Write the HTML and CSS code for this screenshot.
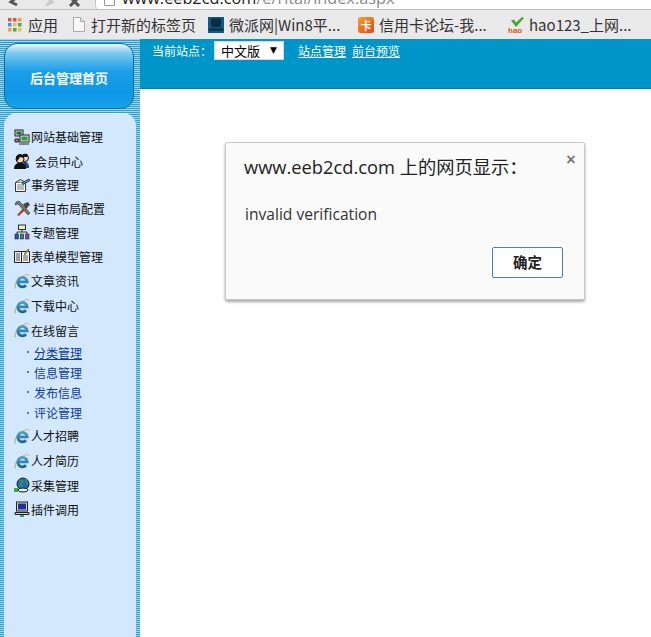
FILE: index.html
```html
<!DOCTYPE html>
<html lang="zh-CN">
<head>
<meta charset="utf-8">
<title>后台管理</title>
<link rel="stylesheet" href="styles.css">
</head>
<body>
<svg class="defs" width="0" height="0" aria-hidden="true">
  <defs>
    <linearGradient id="ieFill" gradientUnits="userSpaceOnUse" x1="0" y1="3" x2="0" y2="15"><stop offset="0" stop-color="#4fa8d4"/><stop offset="1" stop-color="#17609a"/></linearGradient>
    <symbol id="ie" viewBox="0 0 16 16">
      <path d="M1.500 15.500C0 11 4 5 10 2.500" fill="none" stroke="#cdb27a" stroke-width="1.300"/>
      <path d="M5 8.800H13.200A4.700 4.700 0 1 0 12 12.300" fill="none" stroke="url(#ieFill)" stroke-width="2.800"/>
      <path d="M9 2.800C12 1 15 1 15.500 3" fill="none" stroke="#d9b76a" stroke-width="1"/>
    </symbol>
    <linearGradient id="card" x1="0" y1="0" x2="1" y2="1"><stop offset="0" stop-color="#f7a21e"/><stop offset="1" stop-color="#e6441a"/></linearGradient>
  </defs>
</svg>

<header class="chrome">
  <div class="toolbar">
    <div class="nav-buttons">
      <svg class="nav-icon" width="90" height="10" viewBox="0 0 90 10">
        <path d="M18 -4 11 2l6 3" fill="none" stroke="#555" stroke-width="3"/>
        <path d="M46 -4l6 6-6 3" fill="none" stroke="#c9c9c9" stroke-width="3"/>
        <path d="M70 -3l9 9M79 -3l-9 9" stroke="#555" stroke-width="3"/>
      </svg>
    </div>
    <div class="omnibox">
      <svg class="page-icon" width="11" height="8" viewBox="0 0 11 8"><path d="M.5 0v5.500h10V0" fill="#fff" stroke="#999"/></svg>
      <span class="url"><b>www.eeb2cd.com</b>/e/ritai/index.aspx</span>
    </div>
  </div>
  <nav class="bookmarks">
    <a class="bookmark apps">
      <svg width="14" height="14" viewBox="0 0 14 14">
        <g fill="#d9534a"><rect width="3.500" height="3.500"/><rect x="5" width="3.500" height="3.500"/></g><rect x="10" width="3.500" height="3.500" fill="#e8a33d"/>
        <g fill="#4a8fd9"><rect y="5" width="3.500" height="3.500"/></g><rect x="5" y="5" width="3.500" height="3.500" fill="#e8c33d"/><rect x="10" y="5" width="3.500" height="3.500" fill="#53a653"/>
        <rect y="10" width="3.500" height="3.500" fill="#e8a33d"/><rect x="5" y="10" width="3.500" height="3.500" fill="#53a653"/><rect x="10" y="10" width="3.500" height="3.500" fill="#e8c33d"/>
      </svg>
      应用
    </a>
    <a class="bookmark newtab">
      <svg width="12" height="15" viewBox="0 0 12 15"><path d="M.5.500h7l4 4v10H.5z" fill="#f8f8f8" stroke="#aaa"/><path d="M7.500.500v4h4" fill="#ddd" stroke="#aaa"/></svg>
      打开新的标签页
    </a>
    <a class="bookmark weipai">
      <svg width="16" height="16" viewBox="0 0 16 16"><rect width="16" height="16" fill="#0d5c86"/><rect x="3" y="1.500" width="10" height="8.500" fill="#0b2a44"/><rect x="1" y="11.500" width="14" height="2" fill="#0b2a44"/></svg>
      <span class="shift">微派网|Win8平...</span>
    </a>
    <a class="bookmark credit">
      <svg width="16" height="16" viewBox="0 0 16 16"><rect width="16" height="16" rx="2.500" fill="url(#card)"/><text class="card-glyph" x="8" y="12.500">卡</text></svg>
      <span class="shift">信用卡论坛-我...</span>
    </a>
    <a class="bookmark hao">
      <svg width="17" height="16" viewBox="0 0 17 16"><path d="M3 3.500l3-1 2 3 6-5.500 2 1-8 9z" fill="#4aa52e"/><text class="hao-glyph" x="0" y="15.500">hao</text></svg>
      <span class="shift">hao123_上网...</span>
    </a>
  </nav>
</header>

<div class="page">
  <aside class="sidebar">
    <a class="home">后台管理首页</a>
    <ul class="menu">
      <li class="item tall">
        <svg class="icon" viewBox="0 0 16 16"><rect x="1" y="1" width="8" height="6" fill="#cfd5cf" stroke="#222"/><rect x="2.500" y="2.500" width="5" height="3" fill="#1f6f3a"/><rect x="6" y="6" width="9" height="7" fill="#dfe3df" stroke="#222"/><rect x="7.500" y="7.500" width="6" height="4" fill="#22a03c"/><path d="M1 10h4v3H1zM5 15h10" stroke="#222" fill="#888"/></svg>
        网站基础管理
      </li>
      <li class="item indent">
        <svg class="icon" viewBox="0 0 16 16"><circle cx="11" cy="5" r="3.500" fill="#f3d9b8" stroke="#111"/><path d="M8 2.500a3.500 3 0 0 1 6-.5l-1 2H9z" fill="#111"/><path d="M7 15c0-5 2-6 4-6s4 1 4 6z" fill="#24408f"/><circle cx="6" cy="6" r="4" fill="#f3d9b8" stroke="#111"/><path d="M2 6a4 4.500 0 0 1 8-1L6 4 3.500 8z" fill="#111"/><path d="M0 16c0-5 3-6 6-6s6 1 6 6z" fill="#111"/></svg>
        会员中心
      </li>
      <li class="item short">
        <svg class="icon" viewBox="0 0 16 16"><path d="M1.500 5.500h10v9h-10z" fill="#fff" stroke="#333"/><path d="M3 8h7M3 10h7M3 12h7" stroke="#777"/><path d="M1.500 5.500l5-3 5 3" fill="#d8d8c0" stroke="#333"/><path d="M8 6 15 2l1 1.500-7 4z" fill="#5aa0d8" stroke="#245"/></svg>
        事务管理
      </li>
      <li class="item indent-sm">
        <svg class="icon" viewBox="0 0 16 16"><path d="M3 15 12 5l2 2-9 9z" fill="#c23a1e"/><path d="M9 4l5-2 2 3-4 3z" fill="#444"/><path d="M14 15 4 4l-3 1 1-3 3-1 3 3 8 9z" fill="#777" stroke="#222" stroke-width=".5"/></svg>
        栏目布局配置
      </li>
      <li class="item">
        <svg class="icon" viewBox="0 0 16 16"><rect x="4.500" y="1" width="7" height="4.500" fill="#f0eec0" stroke="#333"/><path d="M8 5.500V8M3 10V8h10v2" fill="none" stroke="#333"/><rect x="1" y="10" width="3.500" height="5" fill="#2c55a8" stroke="#111" stroke-width=".5"/><rect x="6.200" y="10" width="3.500" height="5" fill="#2c8a70" stroke="#111" stroke-width=".5"/><rect x="11.500" y="10" width="3.500" height="5" fill="#7a4aa8" stroke="#111" stroke-width=".5"/></svg>
        专题管理
      </li>
      <li class="item">
        <svg class="icon" viewBox="0 0 16 16"><path d="M.5 3.500h7v11h-7z" fill="#eee" stroke="#222"/><path d="M7.500 3.500h8v11h-8z" fill="#fff" stroke="#222"/><path d="M2 6h4M2 8h4M2 10h4M2 12h4M9 8h5M9 10h5M9 12h5" stroke="#555"/><path d="M10 6l4-5 1 1-4 5z" fill="#d8b030" stroke="#222" stroke-width=".5"/></svg>
        表单模型管理
      </li>
      <li class="item tall"><svg class="icon"><use href="#ie"/></svg>文章资讯</li>
      <li class="item tall"><svg class="icon"><use href="#ie"/></svg>下载中心</li>
      <li class="item"><svg class="icon"><use href="#ie"/></svg>在线留言</li>
      <li class="sub"><a class="sub-link current">分类管理</a></li>
      <li class="sub"><a class="sub-link">信息管理</a></li>
      <li class="sub"><a class="sub-link">发布信息</a></li>
      <li class="sub last"><a class="sub-link">评论管理</a></li>
      <li class="item tall"><svg class="icon"><use href="#ie"/></svg>人才招聘</li>
      <li class="item tall"><svg class="icon"><use href="#ie"/></svg>人才简历</li>
      <li class="item">
        <svg class="icon" viewBox="0 0 16 16"><circle cx="9" cy="7" r="6" fill="#2468b8" stroke="#123"/><path d="M6 3c3 0 3 3 1 4s1 3 3 4M11 2c2 2 1 4 3 5" stroke="#36a04a" fill="none" stroke-width="1.500"/><ellipse cx="9" cy="13" rx="5" ry="2" fill="#eee" stroke="#111"/><rect x="0" y="11" width="4" height="4" fill="#3aa83a"/></svg>
        采集管理
      </li>
      <li class="item">
        <svg class="icon" viewBox="0 0 16 16"><rect x="2.500" y="1" width="11" height="9" fill="#d8d8d8" stroke="#222"/><rect x="4" y="2.500" width="8" height="6" fill="#1c2f9c"/><path d="M1 11.500h14v2H1z" fill="#cfcfcf" stroke="#222"/><path d="M6 15h4" stroke="#3a3" stroke-width="2"/></svg>
        插件调用
      </li>
    </ul>
  </aside>

  <main class="main">
    <div class="topbar">
      <span class="site-label">当前站点：</span>
      <div class="site-select"><span>中文版</span><span class="caret">▼</span></div>
      <a class="top-link first-link">站点管理</a>
      <a class="top-link">前台预览</a>
    </div>
  </main>
</div>

<div class="dialog" role="alertdialog">
  <button class="close" aria-label="关闭">×</button>
  <h1 class="dialog-title">www.eeb2cd.com 上的网页显示：</h1>
  <p class="dialog-msg">invalid verification</p>
  <div class="dialog-actions"><button class="ok">确定</button></div>
</div>
</body>
</html>
```

FILE: styles.css
```css
* { box-sizing: border-box; }
html, body { margin: 0; height: 100%; }
body {
  width: 651px;
  height: 637px;
  overflow: hidden;
  position: relative;
  background: #fff;
  font-family: "Noto Sans CJK SC", "Liberation Sans", sans-serif;
  font-size: 12px;
  color: #111;
}
.defs { position: absolute; }

/* Browser chrome */
.chrome { height: 39px; display: flex; flex-direction: column; background: #e9e9e9; }
.toolbar { height: 10px; display: flex; background: #e9e9e9; border-bottom: 1px solid #bdbdbd; }
.nav-buttons { width: 95px; flex: none; }
.nav-icon { display: block; }
.omnibox {
  flex: 1;
  height: 9px;
  display: flex;
  align-items: flex-start;
  gap: 7px;
  padding-left: 8px;
  background: #fff;
  border-left: 1px solid #c4c4c4;
  border-bottom-left-radius: 4px;
  overflow: hidden;
}
.page-icon { flex: none; }
.url {
  margin-top: -12px;
  font-family: "Open Sans", sans-serif;
  font-size: 16.300px;
  line-height: 20px;
  color: #8a8a8a;
  white-space: nowrap;
}
.url b { font-weight: 400; color: #222; }

.bookmarks {
  height: 29px;
  display: flex;
  align-items: center;
  font-size: 15px;
  color: #333;
  padding-left: 8px;
  white-space: nowrap;
}
.bookmark { display: flex; align-items: center; gap: 6px; line-height: 20px; flex: none; }
.apps { width: 65px; }
.newtab { width: 135px; }
.weipai { width: 150px; }
.credit { width: 150px; }
.hao { gap: 5px; }
.shift { margin-left: -1px; }
.card-glyph { font-size: 11px; font-weight: 700; fill: #fff; text-anchor: middle; }
.hao-glyph { font-family: "Liberation Sans", sans-serif; font-size: 8px; font-weight: 700; fill: #d9541e; }

/* Page */
.page { display: flex; height: 598px; }
.sidebar {
  width: 140px;
  flex: none;
  padding: 4px 4px 0;
  display: flex;
  flex-direction: column;
  gap: 4px;
  background: repeating-linear-gradient(to bottom, #9fd6ec 0, #9fd6ec 1px, #2f9fd0 1px, #2f9fd0 2px);
}
.home {
  height: 66px;
  margin-right: 2px;
  padding-top: 3px;
  display: flex;
  align-items: center;
  justify-content: center;
  border: 1px solid #0a6ea8;
  border-radius: 13px;
  background: linear-gradient(to bottom, #eef8fd 0, #7cc9f0 14%, #1c9fe8 42%, #0e96e6 75%, #15a3ea 100%);
  color: #fff;
  font-weight: 700;
  font-size: 13px;
}
.menu {
  flex: 1;
  list-style: none;
  margin: 0;
  padding: 10px 0 0 9px;
  width: 132px;
  background: #d3e8fd;
  border-radius: 13px 13px 0 0;
  border-top: 1px solid #eef7ff;
}
.item { height: 24px; display: flex; align-items: center; gap: 1px; font-size: 12px; color: #111; white-space: nowrap; }
.item.tall { height: 25px; }
.item.short { height: 23px; }
.item.indent { gap: 5px; }
.item.indent-sm { gap: 3px; }
.icon { width: 16px; height: 16px; flex: none; margin-left: 1px; }
.sub { height: 20px; display: flex; align-items: center; padding-left: 14px; }
.sub.last { height: 21px; }
.sub::before { content: ""; width: 2px; height: 2px; flex: none; margin-right: 5px; background: #5a7a9a; }
.sub-link { color: #0b3a9e; font-size: 12px; }
.sub-link.current { text-decoration: underline; }

.main { flex: 1; min-width: 0; }
.topbar {
  height: 50px;
  padding: 2px 0 0 12px;
  display: flex;
  align-items: flex-start;
  background: #0095c8;
  color: #fff;
  line-height: 20px;
  border-bottom: 1px solid #0a7ea8;
}
.site-label { width: 62px; flex: none; }
.site-select {
  width: 70px;
  height: 19px;
  flex: none;
  display: flex;
  justify-content: space-between;
  align-items: center;
  padding: 0 6px 0 6px;
  background: #fff;
  color: #000;
  border: 1px solid #c6dfe9;
  font-size: 13px;
  line-height: 17px;
}
.caret { font-size: 9px; font-family: "DejaVu Sans", sans-serif; }
.top-link { color: #fff; text-decoration: underline; margin-left: 6px; }
.top-link.first-link { margin-left: 14px; }

/* Alert dialog */
.dialog {
  position: absolute;
  left: 225px;
  top: 142px;
  width: 360px;
  height: 158px;
  padding: 12px 18px 0;
  background: #fafafa;
  border: 1px solid #c8c8c8;
  border-radius: 2px;
  box-shadow: 0 2px 3px rgba(0, 0, 0, .35);
  display: flex;
  flex-direction: column;
}
.close {
  position: absolute;
  top: 9px;
  right: 7px;
  width: 12px;
  height: 16px;
  padding: 0;
  border: 0;
  background: none;
  color: #777;
  font: 700 16px/16px "Liberation Sans", sans-serif;
}
.dialog-title {
  margin: 0;
  font-family: "Open Sans", "Noto Sans CJK SC", sans-serif;
  font-size: 18.300px;
  line-height: 24px;
  font-weight: 400;
  color: #222;
  white-space: nowrap;
}
.dialog-msg {
  margin: 25px 0 0 1px;
  font-family: "Open Sans", "Noto Sans CJK SC", sans-serif;
  font-size: 15.600px;
  line-height: 20px;
  color: #333;
}
.dialog-actions { display: flex; justify-content: flex-end; margin: 23px 3px 0 0; }
.ok {
  width: 71px;
  height: 31px;
  padding: 0;
  background: #fff;
  border: 1px solid #4f82a8;
  border-radius: 2px;
  color: #222;
  font: 700 14.500px/1 "Noto Sans CJK SC", sans-serif;
}
```
